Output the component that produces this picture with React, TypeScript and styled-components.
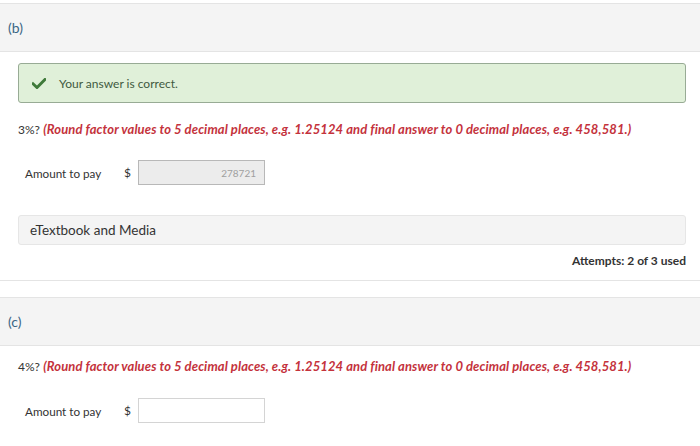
import React from "react";
import styled, { createGlobalStyle } from "styled-components";

const Global = createGlobalStyle`
  html, body { margin: 0; padding: 0; background: #fff; }
  body { font-family: Lato, "Open Sans", "Liberation Sans", sans-serif; color: #333; }
`;

const Page = styled.div`
  width: 700px;
  padding-top: 3px;
`;

const PartHeader = styled.div`
  height: 47px;
  background: #f4f4f4;
  border-top: 1px solid #e4e4e4;
  border-bottom: 1px solid #e4e4e4;
  display: flex;
  align-items: center;
  padding-left: 8px;
  font-size: 14px;
  color: #3a6684;
`;

const PartBody = styled.div<{ $pt: number }>`
  padding: ${(p) => p.$pt}px 14px 0 18px;
`;

const Alert = styled.div`
  height: 38px;
  display: flex;
  align-items: center;
  background: #e0f0d9;
  border: 1px solid #98ab95;
  border-radius: 3px;
  padding-left: 13px;
  gap: 13px;
  font-size: 12px;
  color: #3f5a3f;
`;

const Question = styled.div<{ $mt: number }>`
  margin-top: ${(p) => p.$mt}px;
  font-size: 13px;
  line-height: 16px;
  color: #333;
`;

const Lead = styled.span`
  font-size: 12px;
`;

const Hint = styled.span`
  color: #c4323c;
  font-weight: 700;
  font-style: italic;
  letter-spacing: 0.1px;
`;

const AnswerRow = styled.div<{ $mt: number }>`
  margin-top: ${(p) => p.$mt}px;
  display: flex;
  align-items: center;
  padding-left: 7px;
  height: 25px;
`;

const Label = styled.span`
  width: 99px;
  font-size: 11.7px;
  color: #333;
`;

const Dollar = styled.span`
  width: 14px;
  font-size: 12px;
  color: #333;
`;

const Input = styled.div<{ $filled?: boolean }>`
  width: 127px;
  height: 25px;
  box-sizing: border-box;
  border: 1px solid ${(p) => (p.$filled ? "#b8b8b8" : "#d4d4d4")};
  background: ${(p) => (p.$filled ? "#ececec" : "#fff")};
  display: flex;
  align-items: center;
  justify-content: flex-end;
  padding-right: 8px;
  font-size: 10px;
  color: #a0a0a0;
`;

const Media = styled.div`
  margin-top: 30px;
  height: 28px;
  background: #f4f4f4;
  border: 1px solid #e6e6e6;
  border-radius: 3px;
  display: flex;
  align-items: center;
  padding-left: 11px;
  font-size: 13.5px;
  color: #333;
`;

const Attempts = styled.div`
  margin-top: 8px;
  text-align: right;
  font-size: 12px;
  font-weight: 700;
  color: #333;
  line-height: 16px;
`;

const Divider = styled.div`
  margin-top: 11px;
  border-top: 1px solid #e4e4e4;
  height: 16px;
`;

const Check = () => (
  <svg width="14" height="11" viewBox="0 0 14 11">
    <path d="M1 5.8 L5 9.6 L13 1.4" fill="none" stroke="#3f7a3a" strokeWidth="2.8" strokeLinecap="square" />
  </svg>
);

export default function App() {
  return (
    <>
      <Global />
      <Page>
        <PartHeader>(b)</PartHeader>
        <PartBody $pt={11}>
          <Alert>
            <Check />
            <span>Your answer is correct.</span>
          </Alert>
          <Question $mt={18}>
            <Lead>3%?</Lead> <Hint>(Round factor values to 5 decimal places, e.g. 1.25124 and final answer to 0 decimal places, e.g. 458,581.)</Hint>
          </Question>
          <AnswerRow $mt={22}>
            <Label>Amount to pay</Label>
            <Dollar>$</Dollar>
            <Input $filled>278721</Input>
          </AnswerRow>
        </PartBody>
        <PartBody $pt={0}>
          <Media>eTextbook and Media</Media>
          <Attempts>Attempts: 2 of 3 used</Attempts>
        </PartBody>
        <Divider />
        <PartHeader>(c)</PartHeader>
        <PartBody $pt={0}>
          <Question $mt={12}>
            <Lead>4%?</Lead> <Hint>(Round factor values to 5 decimal places, e.g. 1.25124 and final answer to 0 decimal places, e.g. 458,581.)</Hint>
          </Question>
          <AnswerRow $mt={23}>
            <Label>Amount to pay</Label>
            <Dollar>$</Dollar>
            <Input />
          </AnswerRow>
        </PartBody>
      </Page>
    </>
  );
}
